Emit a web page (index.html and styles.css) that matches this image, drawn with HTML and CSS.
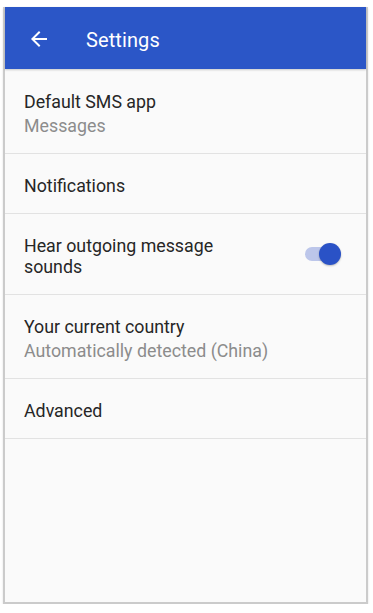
FILE: index.html
```html
<!DOCTYPE html>
<html>
<head>
<meta charset="utf-8">
<link rel="stylesheet" href="styles.css">
</head>
<body>
<div class="device">
  <header class="appbar">
    <svg class="back" width="24" height="24" viewBox="0 0 24 24"><path d="M20 11H7.83l5.59-5.59L12 4l-8 8 8 8 1.41-1.41L7.83 13H20v-2z" fill="#fff"/></svg>
    <span class="title">Settings</span>
  </header>
  <div class="list">
    <div class="row first">
      <div class="text">
        <div class="primary">Default SMS app</div>
        <div class="secondary">Messages</div>
      </div>
    </div>
    <div class="row short">
      <div class="text"><div class="primary">Notifications</div></div>
    </div>
    <div class="row tall">
      <div class="text"><div class="primary">Hear outgoing message<br>sounds</div></div>
      <div class="switch"><div class="track"></div><div class="thumb"></div></div>
    </div>
    <div class="row country">
      <div class="text">
        <div class="primary">Your current country</div>
        <div class="secondary">Automatically detected (China)</div>
      </div>
    </div>
    <div class="row short">
      <div class="text"><div class="primary">Advanced</div></div>
    </div>
  </div>
</div>
</body>
</html>
```
FILE: styles.css
```css
html, body {
  margin: 0;
  padding: 0;
  background: #ffffff;
}
body {
  font-family: Roboto, "Liberation Sans", sans-serif;
}
.device {
  margin: 7px 0 0 3px;
  width: 361px;
  height: 595px;
  background: #fafafa;
  border-left: 2px solid #cbcbcb;
  border-right: 2px solid #cbcbcb;
  border-bottom: 2px solid #cbcbcb;
  box-shadow: 0 1px 2px rgba(0,0,0,0.12);
  display: flex;
  flex-direction: column;
}
.appbar {
  height: 62px;
  background: #2b56c7;
  display: flex;
  align-items: center;
  box-shadow: 0 1px 2px rgba(0,0,0,0.2);
}
.back {
  margin-left: 22px;
  margin-top: 2px;
  width: 24px;
  height: 24px;
}
.title {
  margin-left: 35px;
  padding-top: 4px;
  color: #ffffff;
  font-size: 20px;
  font-weight: 400;
  letter-spacing: 0.1px;
}
.list {
  display: flex;
  flex-direction: column;
}
.row {
  display: flex;
  align-items: center;
  padding: 0 25px 0 19px;
  border-bottom: 1px solid #e2e2e2;
}
.row.first { height: 84px; }
.row.tall { height: 80px; }
.row.country { height: 83px; }
.row.short { height: 59px; }
.text {
  flex: 1;
  padding-top: 4px;
}
.primary {
  color: #262626;
  font-size: 17.8px;
  line-height: 21px;
}
.secondary {
  color: #8c8c8c;
  font-size: 17.8px;
  line-height: 21px;
  margin-top: 3px;
}
.switch {
  position: relative;
  width: 38px;
  height: 24px;
}
.track {
  position: absolute;
  left: 2px;
  top: 5px;
  width: 34px;
  height: 14px;
  border-radius: 7px;
  background: #bcc6ea;
}
.thumb {
  position: absolute;
  right: 0;
  top: 1px;
  width: 22px;
  height: 22px;
  border-radius: 50%;
  background: #2a52c6;
  box-shadow: 0 1px 2px rgba(0,0,0,0.25);
}
```
